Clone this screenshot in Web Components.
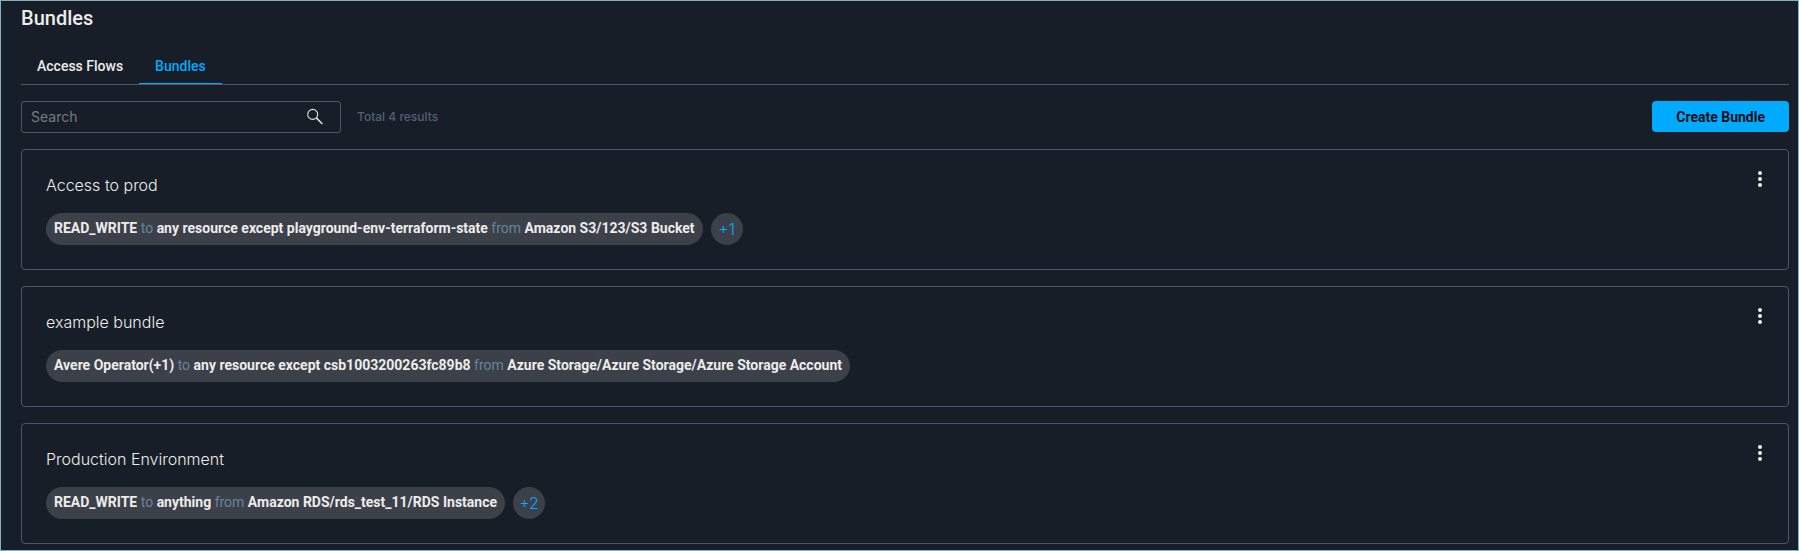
<!DOCTYPE html>
<html lang="en">
<head>
<meta charset="utf-8">
<title>Bundles</title>
<style>
  body { margin: 0; background: #171e27; }
</style>
</head>
<body>
<bundles-page></bundles-page>

<template id="page-tpl">
  <style>
    :host {
      --line: #4a576d;
      --accent: #00aaff;
      --text: #ececec;
      --ui: Roboto, "Liberation Sans", sans-serif;
      --body: Inter, "Liberation Sans", sans-serif;
      display: block; box-sizing: border-box; min-height: 100vh;
      padding: 4px 9px 4px 20px; border: 1px solid #86b0be;
      background: #171e27; color: var(--text); font-family: var(--ui);
    }
    h1 { margin: 0; font-size: 20px; line-height: 26px; font-weight: 500; }
    nav { display: flex; margin-top: 17px; border-bottom: 1px solid var(--line); }
    .toolbar { display: flex; align-items: flex-start; gap: 16px; margin: 16px 0; }
    .total { flex: 1; font: 500 12px/32px var(--body); color: #52617a; }
    main { display: flex; flex-direction: column; gap: 16px; }
  </style>
  <h1>Bundles</h1>
  <nav>
    <nav-tab>Access Flows</nav-tab>
    <nav-tab active>Bundles</nav-tab>
  </nav>
  <div class="toolbar">
    <search-box></search-box>
    <span class="total">Total 4 results</span>
    <primary-button>Create Bundle</primary-button>
  </div>
  <main>
    <bundle-card name="Access to prod">
      <access-chip><b>READ_WRITE</b> to <b>any resource except playground-env-terraform-state</b> from <b>Amazon S3/123/S3 Bucket</b></access-chip>
      <more-chip>+1</more-chip>
    </bundle-card>
    <bundle-card name="example bundle">
      <access-chip><b>Avere Operator(+1)</b> to <b>any resource except csb1003200263fc89b8</b> from <b>Azure Storage/Azure Storage/Azure Storage Account</b></access-chip>
    </bundle-card>
    <bundle-card name="Production Environment">
      <access-chip><b>READ_WRITE</b> to <b>anything</b> from <b>Amazon RDS/rds_test_11/RDS Instance</b></access-chip>
      <more-chip>+2</more-chip>
    </bundle-card>
  </main>
</template>

<template id="tab-tpl">
  <style>
    :host { display: block; }
    a { display: block; padding: 8px 16px 7px; border-bottom: 1px solid transparent;
        font: 500 14px/20px var(--ui); color: var(--text); text-decoration: none; }
    :host([active]) a { color: var(--accent); border-color: var(--accent); }
  </style>
  <a href="#"><slot></slot></a>
</template>

<template id="search-tpl">
  <style>
    :host { display: flex; align-items: center; box-sizing: border-box; width: 320px; height: 32px;
            padding: 0 16px 0 9px; border: 1px solid var(--line); border-radius: 3px; }
    input { flex: 1; min-width: 0; padding: 0; border: 0; outline: 0; background: none;
            font: 400 14px/20px var(--body); color: var(--text); }
    input::placeholder { color: #747b84; opacity: 1; }
    button { display: flex; padding: 0; border: 0; background: none; color: #e0e0e0; }
  </style>
  <input type="text" placeholder="Search" aria-label="Search">
  <button type="button" aria-label="Run search">
    <svg width="18" height="18" viewBox="0 0 18 18" fill="none" stroke="currentColor" stroke-width="1.1">
      <circle cx="6.7" cy="6.4" r="5"/><path d="M10.3 9.9 16.4 16" stroke-width="1.5"/>
    </svg>
  </button>
</template>

<template id="button-tpl">
  <style>
    :host { display: block; }
    button { display: block; height: 31px; padding: 0 24px; border: 0; border-radius: 4px;
             background: var(--accent); color: #080c12; font: 700 14px/20px var(--ui); }
  </style>
  <button type="button"><slot></slot></button>
</template>

<template id="card-tpl">
  <style>
    :host { display: flex; align-items: flex-start; justify-content: space-between; box-sizing: border-box;
            padding: 20px 24px 24px; border: 1px solid var(--line); border-radius: 4px; }
    h2 { margin: 3px 0 16px; font: 300 16px/24px var(--body); color: var(--text); }
    .chips { display: flex; gap: 8px; }
    button { display: flex; padding: 0 2px; border: 0; background: none; color: #f0f0f0; }
  </style>
  <div>
    <h2></h2>
    <div class="chips"><slot></slot></div>
  </div>
  <button type="button" aria-label="More actions">
    <svg width="4" height="18" viewBox="0 0 4 18" fill="currentColor">
      <circle cx="2" cy="3" r="2"/><circle cx="2" cy="9" r="2"/><circle cx="2" cy="15" r="2"/>
    </svg>
  </button>
</template>

<template id="chip-tpl">
  <style>
    :host { display: block; padding: 5px 8px 7px; border-radius: 16px; background: #3c4049;
            font: 400 14px/20px var(--ui); color: #66859c; white-space: nowrap; }
    ::slotted(b) { font-weight: 700; color: #ececec; }
  </style>
  <slot></slot>
</template>

<template id="more-tpl">
  <style>
    :host { display: block; }
    button { width: 32px; height: 32px; padding: 0; border: 0; border-radius: 16px;
             background: #3c4049; color: var(--accent); font: 300 16px/24px var(--body); }
  </style>
  <button type="button"><slot></slot></button>
</template>

<script>
  class TemplateElement extends HTMLElement {
    constructor() {
      super();
      const tpl = document.getElementById(this.constructor.template);
      this.attachShadow({ mode: "open" }).append(tpl.content.cloneNode(true));
    }
  }
  class NavTab extends TemplateElement { static template = "tab-tpl"; }
  class SearchBox extends TemplateElement { static template = "search-tpl"; }
  class PrimaryButton extends TemplateElement { static template = "button-tpl"; }
  class AccessChip extends TemplateElement { static template = "chip-tpl"; }
  class MoreChip extends TemplateElement { static template = "more-tpl"; }
  class BundleCard extends TemplateElement {
    static template = "card-tpl";
    connectedCallback() {
      this.shadowRoot.querySelector("h2").textContent = this.getAttribute("name");
    }
  }
  class BundlesPage extends TemplateElement { static template = "page-tpl"; }
  customElements.define("nav-tab", NavTab);
  customElements.define("search-box", SearchBox);
  customElements.define("primary-button", PrimaryButton);
  customElements.define("access-chip", AccessChip);
  customElements.define("more-chip", MoreChip);
  customElements.define("bundle-card", BundleCard);
  customElements.define("bundles-page", BundlesPage);
</script>
</body>
</html>
